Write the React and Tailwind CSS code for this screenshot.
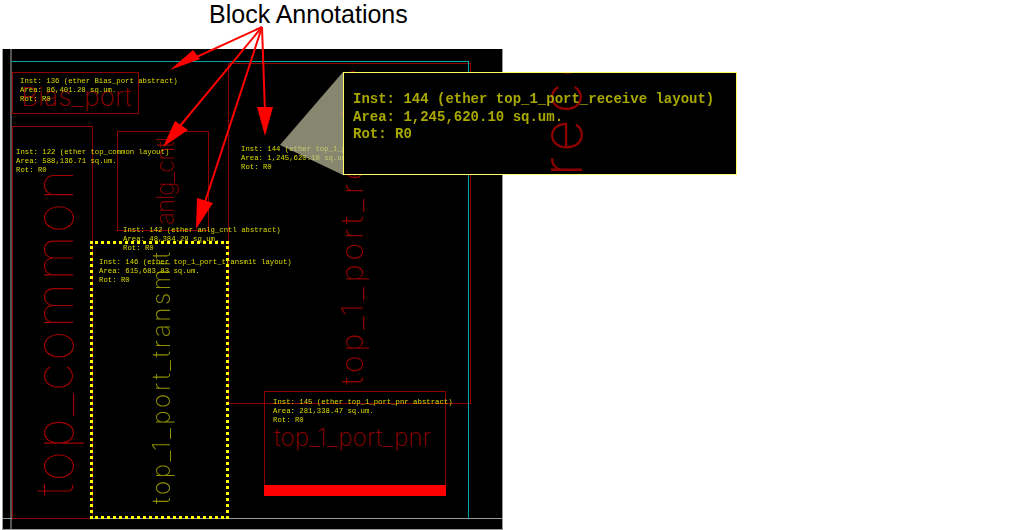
import React from "react";

const mono = "font-['Liberation_Mono','DejaVu_Sans_Mono',monospace]";
const stroke = "font-['Inter','Roboto',sans-serif] font-extralight";
const hairline = "font-['Inter','Roboto',sans-serif] font-thin";

// small instance label drawn on the layout
const Label = ({ className, lines }) => (
  <div className={`absolute flex flex-col text-[7.3px] leading-[9.2px] whitespace-pre text-[#dcdc00] ${mono} blur-[0.3px] ${className}`}>
    {lines.map((l) => (
      <div key={l}>{l}</div>
    ))}
  </div>
);

const App = () => {
  return (
    <div className="w-[1013px] h-[530px] bg-white overflow-hidden relative">
      <div className="h-[49px] pl-[209px] text-[25px] leading-[28px] text-black font-['Liberation_Sans',sans-serif]">
        Block Annotations
      </div>

      {/* layout view */}
      <div className="relative ml-[2px] w-[501px] h-[481px] bg-black border-x border-b border-[#9a9a9a] overflow-hidden">
        <div className="absolute left-[7px] top-0 bottom-0 w-[2px] bg-[#555555]" />
        <div className="absolute left-0 right-0 top-[469px] h-[1px] bg-[#9a9a9a]" />

        {/* block outlines */}
        <div className="absolute left-[225px] top-[14px] w-[243px] h-[341px] border border-[#8f0000]" />
        <div className="absolute left-[9px] top-[23px] w-[127px] h-[42px] border border-[#8f0000]" />
        <div className="absolute left-[9px] top-[77px] w-[81px] h-[393px] border border-[#8f0000]" />
        <div className="absolute left-[114px] top-[82px] w-[92px] h-[100px] border border-[#8f0000]" />
        <div className="absolute left-[261px] top-[342px] w-[182px] h-[105px] border border-[#8f0000]" />
        <div className="absolute left-[261px] top-[436px] w-[182px] h-[11px] bg-[#ff0000]" />
        <div className="absolute left-[8px] top-[64px] w-[6px] h-[1px] bg-[#8f0000]" />
        <div className="absolute left-[113px] top-[181px] w-[14px] h-[1px] bg-[#8f0000]" />

        {/* boundary */}
        <div className="absolute left-[8px] top-[12px] w-[458px] h-[458px] border-t border-r border-[#00a5a5]" />

        {/* cell names */}
        <div className={`absolute left-[18px] top-[33px] text-[26px] leading-[30px] tracking-[0.2px] whitespace-nowrap text-[#8f0000] ${stroke}`}>
          Bias_port
        </div>
        <div className={`absolute left-[271px] top-[376px] text-[24px] leading-[26px] tracking-[0.2px] whitespace-nowrap text-[#8f0000] ${stroke}`}>
          top_1_port_pnr
        </div>
        <div className={`absolute left-[24px] top-[100px] h-[347px] text-[52px] leading-[56px] tracking-[2.5px] whitespace-nowrap text-[#a00000] [writing-mode:vertical-rl] rotate-180 ${hairline}`}>
          top_common
        </div>
        <div className={`absolute left-[149px] top-[80px] h-[96px] text-[24px] leading-[28px] tracking-[-1px] whitespace-nowrap text-[#8f0000] [writing-mode:vertical-rl] rotate-180 ${stroke}`}>
          anlg_cntl
        </div>
        <div className={`absolute left-[144px] top-[185px] h-[270px] text-[24px] leading-[30px] tracking-[2.7px] whitespace-nowrap text-[#8f8f00] [writing-mode:vertical-rl] rotate-180 ${stroke}`}>
          top_1_port_transmit
        </div>
        <div className={`absolute left-[329px] top-[20px] h-[316px] text-[30px] leading-[40px] tracking-[4px] whitespace-nowrap text-[#8f0000] [writing-mode:vertical-rl] rotate-180 ${stroke}`}>
          top_1_port_receive
        </div>

        {/* selected block */}
        <div className="absolute left-[87px] top-[192px] w-[139px] h-[278px] border-[3px] border-dotted border-[#ffff00]" />
        <div className="absolute left-[226px] top-[354px] w-[36px] h-[1px] bg-[#8f0000]" />

        <Label className="left-[17px] top-[28px]" lines={["Inst: 136 (ether Bias_port abstract)", "Area: 86,401.28 sq.um.", "Rot: R0"]} />
        <Label className="left-[13px] top-[99px]" lines={["Inst: 122 (ether top_common layout)", "Area: 588,136.71 sq.um.", "Rot: R0"]} />
        <Label className="left-[238px] top-[96px]" lines={["Inst: 144 (ether top_1_port_receive layout)", "Area: 1,245,620.10 sq.um.", "Rot: R0"]} />
        <Label className="left-[120px] top-[177px]" lines={["Inst: 142 (ether anlg_cntl abstract)", "Area: 48,384.29 sq.um.", "Rot: R0"]} />
        <Label className="left-[96px] top-[209px]" lines={["Inst: 146 (ether top_1_port_transmit layout)", "Area: 615,683.83 sq.um.", "Rot: R0"]} />
        <Label className="left-[270px] top-[349px]" lines={["Inst: 145 (ether top_1_port_pnr abstract)", "Area: 281,338.47 sq.um.", "Rot: R0"]} />
      </div>

      {/* magnifier wedge and annotation arrows */}
      <svg className="absolute left-0 top-0" width="1013" height="530" viewBox="0 0 1013 530">
        <polygon points="280,145 343,72 343,175" fill="#c0c0a0" fillOpacity="0.7" />
        <g stroke="#ff0000" strokeWidth="2" fill="#ff0000">
          <line x1="262" y1="27" x2="190" y2="60" />
          <line x1="262" y1="27" x2="175" y2="132" />
          <line x1="262" y1="27" x2="204" y2="205" />
          <line x1="262" y1="27" x2="265" y2="112" />
        </g>
        <g fill="#ff0000">
          <polygon points="170,70 193,50 200,59" />
          <polygon points="163,147 175,121 188,130" />
          <polygon points="196,229 197,198 213,203" />
          <polygon points="265,136 257,107 273,107" />
        </g>
      </svg>

      {/* magnified callout */}
      <div className="absolute left-[343px] top-[72px] w-[394px] h-[103px] bg-black border border-[#ffff66] overflow-hidden">
        <div className={`absolute left-[188px] top-[-75px] h-[178px] text-[56px] leading-[60px] tracking-[6px] whitespace-nowrap text-[#8f0000] [writing-mode:vertical-rl] rotate-180 ${stroke}`}>
          rece
        </div>
        <div className={`relative pl-[9px] pt-[18px] text-[14px] leading-[17.5px] whitespace-pre text-[#a8a800] font-bold ${mono} blur-[0.6px]`}>
          <div>Inst: 144 (ether top_1_port_receive layout)</div>
          <div>Area: 1,245,620.10 sq.um.</div>
          <div>Rot: R0</div>
        </div>
      </div>
    </div>
  );
};

export default App;
